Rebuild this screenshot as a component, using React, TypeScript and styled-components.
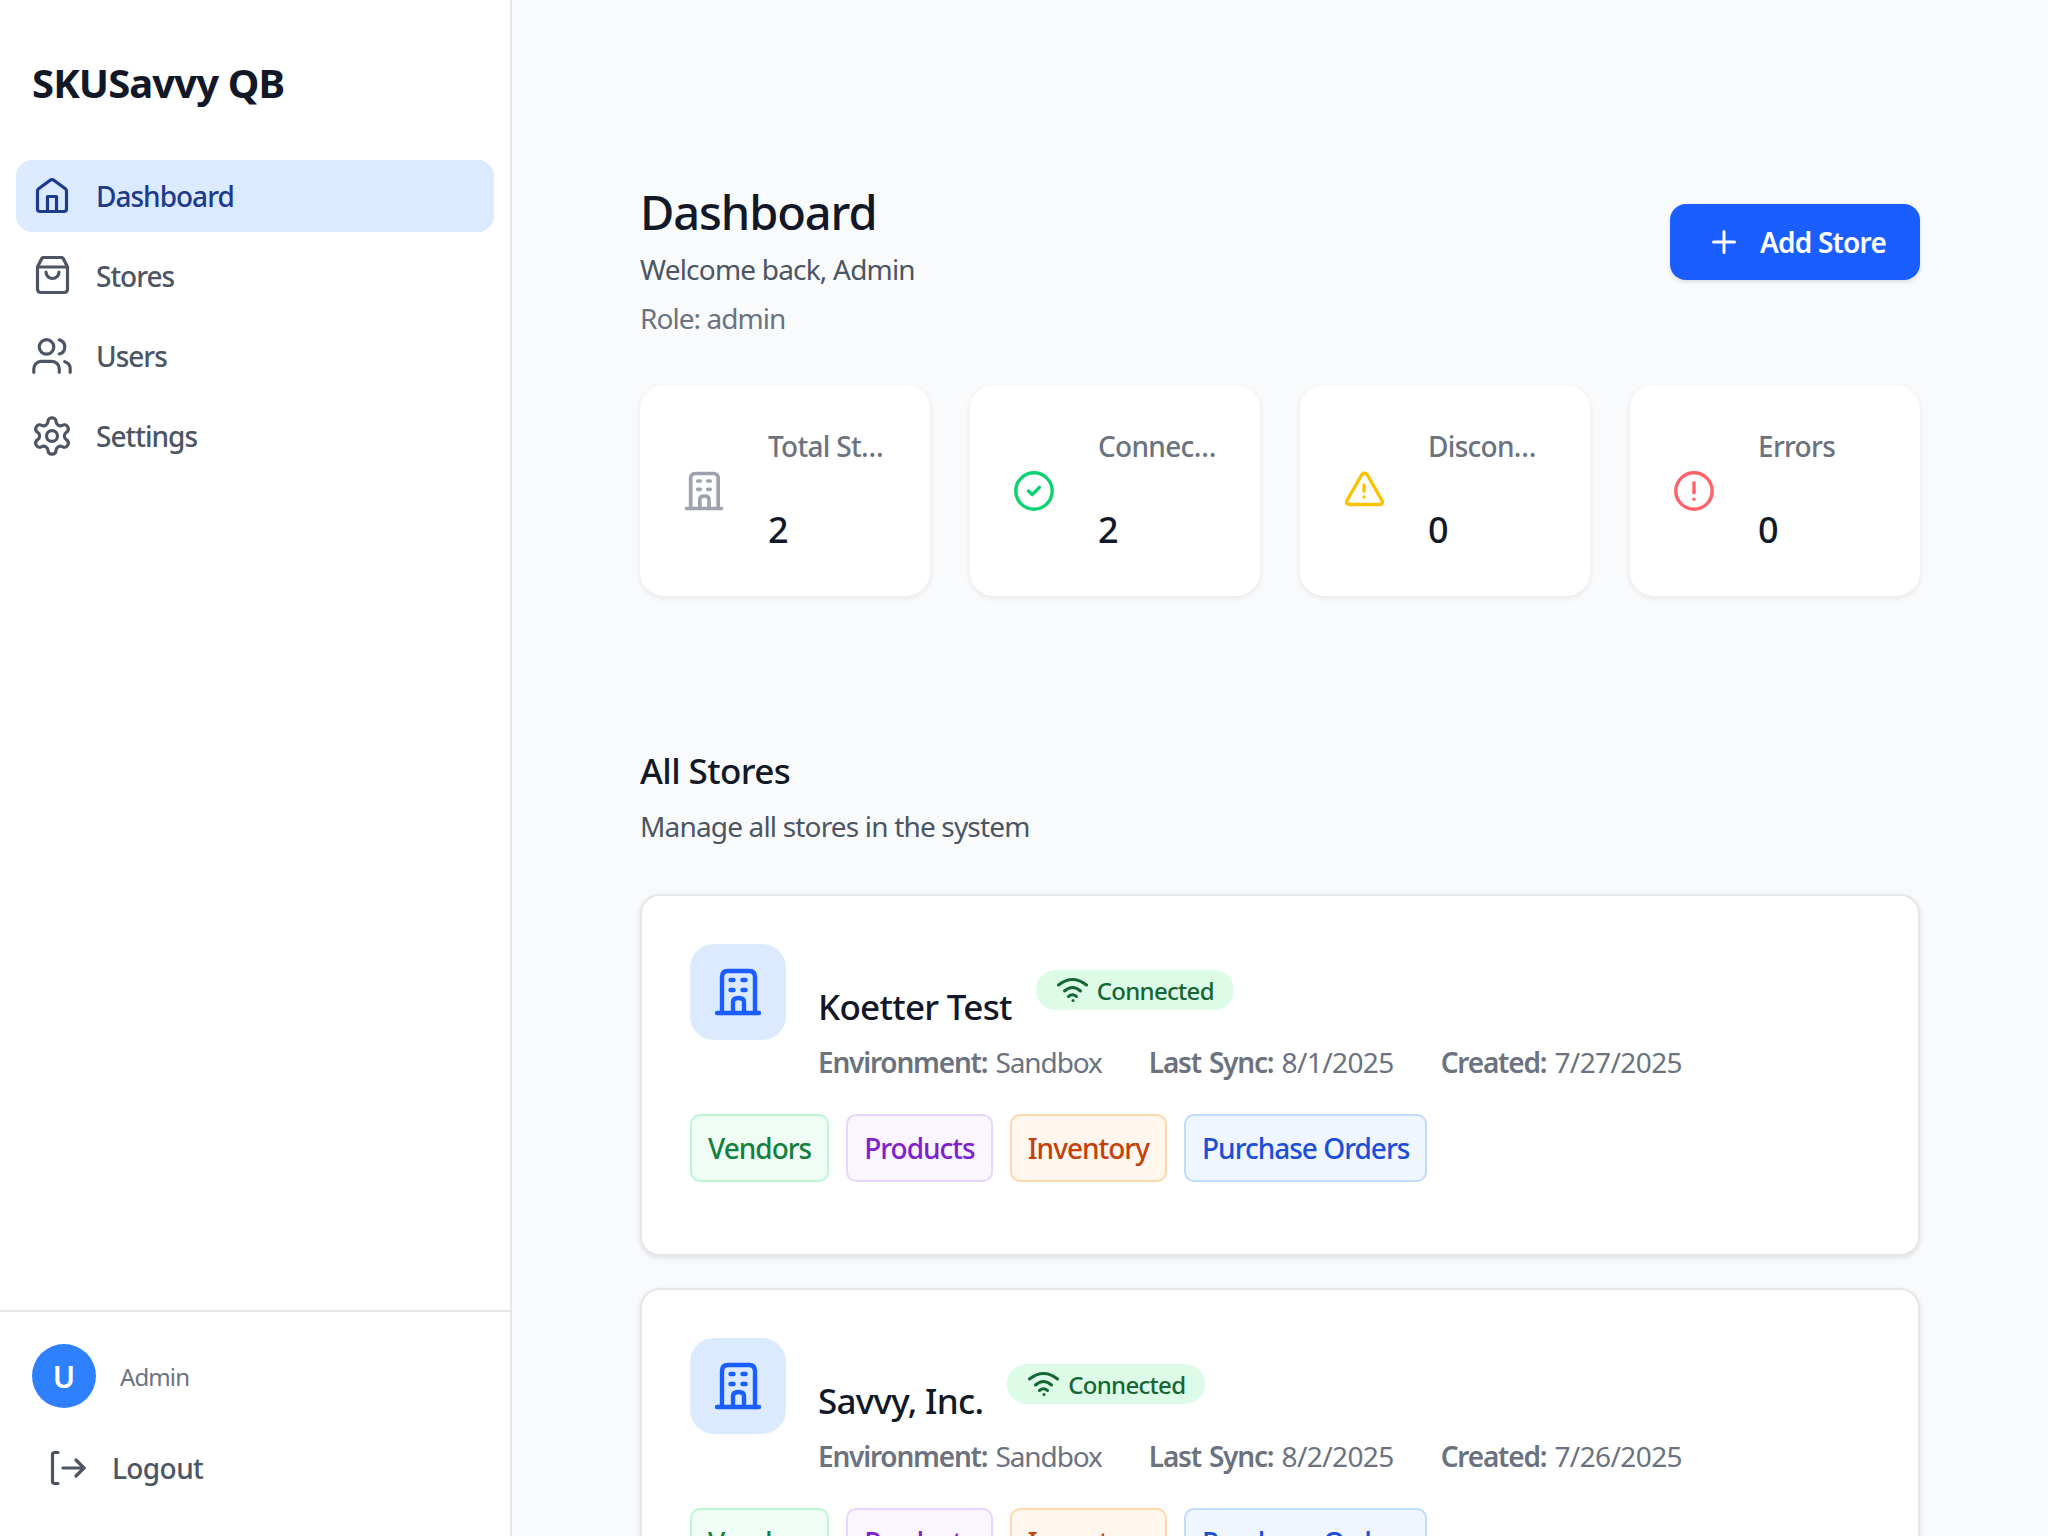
import React from "react";
import styled, { createGlobalStyle } from "styled-components";

const GlobalStyle = createGlobalStyle`
  * { box-sizing: border-box; }
  html, body { margin: 0; padding: 0; height: 100%; overflow: hidden; }
  body {
    font-family: "Noto Sans", "Open Sans", "Liberation Sans", sans-serif;
    background: #f9fafb;
    color: #111827;
  }
`;

const Shell = styled.div`
  display: flex;
  height: 1536px;
  overflow: hidden;
`;

const Sidebar = styled.aside`
  display: flex;
  flex-direction: column;
  flex: 0 0 512px;
  background: #fff;
  border-right: 2px solid #e5e7eb;
`;

const Brand = styled.div`
  padding: 55px 32px 49px;
  font-size: 40px;
  line-height: 56px;
  font-weight: 700;
  letter-spacing: -0.9px;
  color: #111827;
`;

const Nav = styled.nav`
  display: flex;
  flex-direction: column;
  gap: 8px;
  padding: 0 16px;
  flex: 1;
`;

const NavItem = styled.a<{ $active?: boolean }>`
  display: flex;
  align-items: center;
  gap: 24px;
  height: 72px;
  padding: 0 16px;
  border-radius: 16px;
  font-size: 28px;
  letter-spacing: -1px;
  font-weight: 500;
  color: ${(p) => (p.$active ? "#1e3a8a" : "#4b5563")};
  background: ${(p) => (p.$active ? "#dbeafe" : "transparent")};
`;

const Footer = styled.div`
  border-top: 2px solid #e5e7eb;
  padding: 32px 32px 32px;
  height: 226px;
`;

const UserRow = styled.div`
  display: flex;
  align-items: center;
  gap: 24px;
  margin-bottom: 24px;
`;

const Avatar = styled.div`
  display: flex;
  align-items: center;
  justify-content: center;
  width: 64px;
  height: 64px;
  border-radius: 50%;
  background: #2f80ff;
  color: #fff;
  font-size: 30px;
  font-weight: 600;
`;

const UserName = styled.span`
  font-size: 24px;
  letter-spacing: -0.9px;
  color: #6b7280;
`;

const Logout = styled.button`
  display: flex;
  align-items: center;
  gap: 24px;
  height: 72px;
  padding: 0 16px;
  border: 0;
  background: none;
  font: inherit;
  font-size: 28px;
  font-weight: 500;
  letter-spacing: -0.6px;
  color: #4b5563;
`;

const Main = styled.main`
  flex: 1;
  min-width: 0;
  padding: 180px 128px 0;
  overflow: hidden;
`;

const Header = styled.header`
  display: flex;
  justify-content: space-between;
  align-items: flex-start;
  margin-bottom: 38px;
`;

const Title = styled.h1`
  margin: 0 0 5px;
  font-size: 47px;
  line-height: 64px;
  font-weight: 550;
  letter-spacing: -1.1px;
  color: #111827;
`;

const Line = styled.p<{ $soft?: boolean }>`
  margin: 0 0 9px;
  font-size: 28px;
  line-height: 40px;
  letter-spacing: ${(p) => (p.$soft ? "-0.95px" : "-0.8px")};
  color: ${(p) => (p.$soft ? "#6b7280" : "#4b5563")};
`;

const AddButton = styled.button`
  display: flex;
  align-items: center;
  gap: 24px;
  width: 250px;
  height: 76px;
  margin-top: 24px;
  padding: 0 0 0 42px;
  border: 0;
  border-radius: 16px;
  background: #1a5eff;
  box-shadow: 0 2px 4px rgba(0, 0, 0, 0.12);
  color: #fff;
  font: inherit;
  font-size: 28px;
  font-weight: 600;
  letter-spacing: -0.8px;
`;

const Stats = styled.section`
  display: grid;
  grid-template-columns: repeat(4, minmax(0, 1fr));
  gap: 40px;
`;

const StatCard = styled.div`
  display: flex;
  align-items: center;
  gap: 44px;
  height: 211px;
  padding: 0 40px 0 44px;
  border-radius: 24px;
  background: #fff;
  box-shadow: 0 2px 6px rgba(0, 0, 0, 0.08);
`;

const StatBody = styled.div`
  flex: 1;
  min-width: 0;
`;

const StatLabel = styled.div`
  font-size: 28px;
  line-height: 40px;
  font-weight: 500;
  letter-spacing: -0.7px;
  color: #6b7280;
  white-space: nowrap;
  overflow: hidden;
  text-overflow: ellipsis;
`;

const StatValue = styled.div`
  margin-top: 44px;
  margin-bottom: 6px;
  font-size: 36px;
  line-height: 40px;
  font-weight: 500;
  color: #111827;
`;

const SectionHead = styled.div`
  margin-top: 151px;
  margin-bottom: 48px;
`;

const SectionTitle = styled.h2`
  margin: 0 0 11px;
  font-size: 35px;
  line-height: 48px;
  font-weight: 550;
  letter-spacing: -0.6px;
  color: #111827;
`;

const SectionSub = styled.p`
  margin: 0;
  font-size: 28px;
  line-height: 40px;
  letter-spacing: -0.83px;
  color: #4b5563;
`;

const StoreList = styled.div`
  display: flex;
  flex-direction: column;
  gap: 32px;
`;

const StoreCard = styled.article`
  height: 362px;
  flex: none;
  padding: 48px;
  border: 2px solid #e5e7eb;
  border-radius: 20px;
  background: #fff;
  box-shadow: 0 2px 6px rgba(0, 0, 0, 0.1);
`;

const StoreTop = styled.div`
  display: flex;
  align-items: flex-start;
  gap: 32px;
`;

const StoreIcon = styled.div`
  display: flex;
  align-items: center;
  justify-content: center;
  flex: none;
  width: 96px;
  height: 96px;
  border-radius: 24px;
  background: #dbeafe;
`;

const StoreInfo = styled.div`
  margin-top: 26px;
`;

const NameRow = styled.div`
  display: flex;
  align-items: flex-start;
  gap: 24px;
`;

const StoreName = styled.h3`
  margin: 9px 0 0;
  font-size: 35px;
  line-height: 56px;
  font-weight: 500;
  letter-spacing: -0.7px;
  color: #111827;
`;

const Badge = styled.span`
  display: flex;
  align-items: center;
  gap: 8px;
  height: 40px;
  padding: 0 20px 0 21px;
  border-radius: 20px;
  background: #dcfce7;
  color: #166534;
  font-size: 24px;
  font-weight: 500;
  letter-spacing: -0.7px;
`;

const Meta = styled.div`
  display: flex;
  gap: 47px;
  margin-top: 7px;
  font-size: 28px;
  line-height: 40px;
  letter-spacing: -1.1px;
  word-spacing: 2px;
  color: #6b7280;
  strong { font-weight: 600; letter-spacing: -1.2px; }
`;

const MetaDate = styled.span`
  letter-spacing: -0.6px;
`;

const Tags = styled.div`
  display: flex;
  gap: 17px;
  margin-top: 32px;
`;

const tagColors = {
  green: ["#f0fdf4", "#bbf7d0", "#15803d"],
  purple: ["#faf5ff", "#e9d5ff", "#7e22ce"],
  orange: ["#fff7ed", "#fed7aa", "#c2410c"],
  blue: ["#eff6ff", "#bfdbfe", "#1d4ed8"],
};

const Tag = styled.span<{ $tone: keyof typeof tagColors }>`
  display: flex;
  align-items: center;
  height: 68px;
  padding: 0 16px;
  border: 2px solid ${(p) => tagColors[p.$tone][1]};
  border-radius: 10px;
  background: ${(p) => tagColors[p.$tone][0]};
  color: ${(p) => tagColors[p.$tone][2]};
  font-size: 28px;
  font-weight: 500;
  letter-spacing: -1px;
`;

const Glyph = styled.svg<{ $color?: string; $weight?: number }>`
  flex: none;
  fill: none;
  stroke: ${(p) => p.$color ?? "currentColor"};
  stroke-width: ${(p) => p.$weight ?? 1.65};
  stroke-linecap: round;
  stroke-linejoin: round;
`;

const HomeIcon = () => (
  <Glyph width={40} height={40} viewBox="0 0 40 40" $weight={3.2}>
    <path d="M5.5 15Q5.5 13.6 6.6 12.8L18.2 4.2Q20 3 21.8 4.2L33.4 12.8Q34.5 13.6 34.5 15V33Q34.5 35.5 32 35.5H8Q5.5 35.5 5.5 33Z" />
    <path d="M15.5 35.5V20.5H24.5V35.5" />
  </Glyph>
);

const BagIcon = () => (
  <Glyph width={40} height={40} viewBox="0 0 40 40" $weight={3.2}>
    <path d="M5.5 11L9.5 3Q10 1.5 12 1.5H29Q31 1.5 31.5 3L35.5 11V33Q35.5 36.5 32 36.5H9Q5.5 36.5 5.5 33Z" />
    <path d="M5.5 11H35.5" />
    <path d="M14 16a6.5 6.5 0 0 0 13 0" />
  </Glyph>
);

const UsersIcon = () => (
  <Glyph width={40} height={40} viewBox="1 1 22 22" $weight={1.75}>
    <path d="M16 21v-2a4 4 0 0 0-4-4H6a4 4 0 0 0-4 4v2" />
    <circle cx="9" cy="7" r="4" />
    <path d="M22 21v-2a4 4 0 0 0-3-3.87" />
    <path d="M16 3.13a4 4 0 0 1 0 7.75" />
  </Glyph>
);

const GearIcon = () => (
  <Glyph width={40} height={40} viewBox="1 1 22 22" $weight={1.75}>
    <path d="M12.22 2h-.44a2 2 0 0 0-2 2v.18a2 2 0 0 1-1 1.73l-.43.25a2 2 0 0 1-2 0l-.15-.08a2 2 0 0 0-2.73.73l-.22.38a2 2 0 0 0 .73 2.73l.15.1a2 2 0 0 1 1 1.72v.51a2 2 0 0 1-1 1.74l-.15.09a2 2 0 0 0-.73 2.73l.22.38a2 2 0 0 0 2.73.73l.15-.08a2 2 0 0 1 2 0l.43.25a2 2 0 0 1 1 1.73V20a2 2 0 0 0 2 2h.44a2 2 0 0 0 2-2v-.18a2 2 0 0 1 1-1.73l.43-.25a2 2 0 0 1 2 0l.15.08a2 2 0 0 0 2.73-.73l.22-.39a2 2 0 0 0-.73-2.73l-.15-.08a2 2 0 0 1-1-1.74v-.5a2 2 0 0 1 1-1.74l.15-.09a2 2 0 0 0 .73-2.73l-.22-.38a2 2 0 0 0-2.73-.73l-.15.08a2 2 0 0 1-2 0l-.43-.25a2 2 0 0 1-1-1.73V4a2 2 0 0 0-2-2z" />
    <circle cx="12" cy="12" r="3" />
  </Glyph>
);

const LogoutIcon = () => (
  <Glyph width={40} height={40} viewBox="0 0 40 40" $weight={3.2}>
    <path d="M10 4.5H6.5Q4.5 4.5 4.5 7V33Q4.5 35.5 6.5 35.5H10" />
    <path d="M15 20H36" />
    <path d="M28 12L36 20L28 28" />
  </Glyph>
);

const PlusIcon = () => (
  <Glyph width={24} height={24} viewBox="0 0 24 24" $weight={3}>
    <path d="M12 1.5V22.5M1.5 12H22.5" />
  </Glyph>
);

const BuildingIcon = ({ size, color }: { size: number; color: string }) => (
  <Glyph width={size} height={size} viewBox="0 0 48 48" $weight={4.4} $color={color}>
    <path d="M3 45H45" />
    <path d="M8 45V9Q8 3 14 3H35Q41 3 41 9V45" />
    <path d="M19 45V34Q19 30 24.5 30Q30 30 30 34V45" />
    <path d="M16.5 12H19.5M28.5 12H31.5M16.5 22H19.5M28.5 22H31.5" />
  </Glyph>
);

const CheckIcon = () => (
  <Glyph width={40} height={40} viewBox="1 1 22 22" $color="#0dd272" $weight={1.9}>
    <circle cx="12" cy="12" r="10" />
    <path d="M9 12l2 2 4-4" />
  </Glyph>
);

const WarnIcon = () => (
  <Glyph width={40} height={40} viewBox="0 0 40 40" $color="#fcc200" $weight={3.4}>
    <path d="M17.6 4Q20.5 0 23.4 4L37.7 29Q40 33.5 35 33.5H6Q1 33.5 3.3 29Z" />
    <path d="M20 14V20M20 26V26.01" />
  </Glyph>
);

const AlertIcon = () => (
  <Glyph width={40} height={40} viewBox="1 1 22 22" $color="#ff6369" $weight={1.9}>
    <circle cx="12" cy="12" r="10" />
    <path d="M12 7.5V13M12 16.5V16.51" />
  </Glyph>
);

const WifiIcon = () => (
  <Glyph width={32} height={26} viewBox="0 0 32 26" $weight={3}>
    <path d="M1.5 8Q15.5 -3 29.5 8" />
    <path d="M7.5 14Q15.5 7 23.5 14" />
    <path d="M11.5 19.5Q15.5 16 19.5 19.5" />
    <path d="M16 23.5V23.51" />
  </Glyph>
);

const stats = [
  { label: "Total Stores", value: 2, icon: <BuildingIcon size={40} color="#9ca3af" /> },
  { label: "Connected", value: 2, icon: <CheckIcon /> },
  { label: "Disconnected", value: 0, icon: <WarnIcon /> },
  { label: "Errors", value: 0, icon: <AlertIcon /> },
];

const stores = [
  { name: "Koetter Test", env: "Sandbox", sync: "8/1/2025", created: "7/27/2025" },
  { name: "Savvy, Inc.", env: "Sandbox", sync: "8/2/2025", created: "7/26/2025" },
];

export default function App() {
  return (
    <Shell>
      <GlobalStyle />
      <Sidebar>
        <Brand>SKUSavvy QB</Brand>
        <Nav>
          <NavItem $active><HomeIcon />Dashboard</NavItem>
          <NavItem><BagIcon />Stores</NavItem>
          <NavItem><UsersIcon />Users</NavItem>
          <NavItem><GearIcon />Settings</NavItem>
        </Nav>
        <Footer>
          <UserRow>
            <Avatar>U</Avatar>
            <UserName>Admin</UserName>
          </UserRow>
          <Logout><LogoutIcon />Logout</Logout>
        </Footer>
      </Sidebar>
      <Main>
        <Header>
          <div>
            <Title>Dashboard</Title>
            <Line>Welcome back, Admin</Line>
            <Line $soft>Role: admin</Line>
          </div>
          <AddButton><PlusIcon />Add Store</AddButton>
        </Header>
        <Stats>
          {stats.map((s) => (
            <StatCard key={s.label}>
              {s.icon}
              <StatBody>
                <StatLabel>{s.label}</StatLabel>
                <StatValue>{s.value}</StatValue>
              </StatBody>
            </StatCard>
          ))}
        </Stats>
        <SectionHead>
          <SectionTitle>All Stores</SectionTitle>
          <SectionSub>Manage all stores in the system</SectionSub>
        </SectionHead>
        <StoreList>
          {stores.map((s) => (
            <StoreCard key={s.name}>
              <StoreTop>
                <StoreIcon><BuildingIcon size={48} color="#1a5eff" /></StoreIcon>
                <StoreInfo>
                  <NameRow>
                    <StoreName>{s.name}</StoreName>
                    <Badge><WifiIcon />Connected</Badge>
                  </NameRow>
                  <Meta>
                    <span><strong>Environment:</strong> {s.env}</span>
                    <span><strong>Last Sync:</strong> <MetaDate>{s.sync}</MetaDate></span>
                    <span><strong>Created:</strong> <MetaDate>{s.created}</MetaDate></span>
                  </Meta>
                </StoreInfo>
              </StoreTop>
              <Tags>
                <Tag $tone="green">Vendors</Tag>
                <Tag $tone="purple">Products</Tag>
                <Tag $tone="orange">Inventory</Tag>
                <Tag $tone="blue">Purchase Orders</Tag>
              </Tags>
            </StoreCard>
          ))}
        </StoreList>
      </Main>
    </Shell>
  );
}
